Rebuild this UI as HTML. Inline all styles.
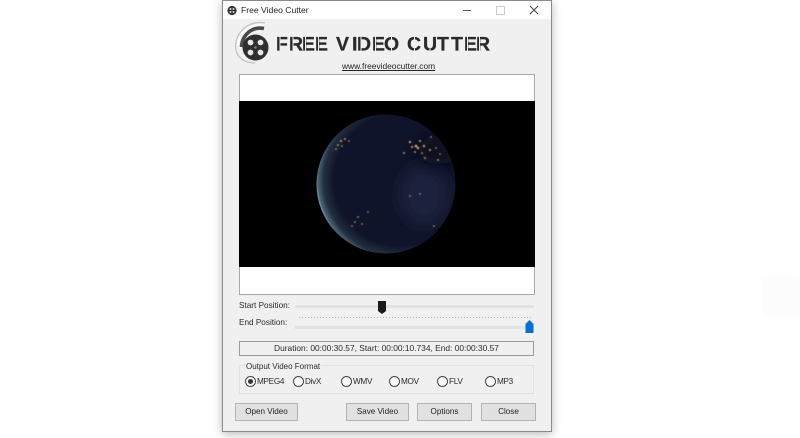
<!DOCTYPE html>
<html><head><meta charset="utf-8">
<style>
html,body{margin:0;padding:0;background:#fff;width:800px;height:438px;overflow:hidden;font-family:"Liberation Sans",sans-serif;color:#222}
.a{position:absolute}
.t{position:absolute;font-size:8.2px;line-height:12px;white-space:nowrap;color:#2a2a2a}
.l{letter-spacing:-.3px;top:376px}
.btn{position:absolute;background:#e1e1e1;border:1px solid #b2b2b2;box-sizing:border-box;font-size:8.1px;text-align:center;line-height:16px;height:18px;color:#222}
.r{position:absolute;top:376px;width:9px;height:9px;border:1px solid #444;border-radius:50%;box-sizing:content-box;background:#fafafa}
</style></head><body>
<div class="a" style="left:222px;top:0;width:330px;height:432px;background:#f0f0f0;box-shadow:0 2px 9px rgba(0,0,0,.28);border:1px solid #8a8a8a;box-sizing:border-box"></div>
<div class="a" style="left:223px;top:1px;width:328px;height:18px;background:#fff"></div>
<svg class="a" style="left:226px;top:4px" width="12" height="12" viewBox="0 0 12 12"><circle cx="6" cy="6.5" r="4.6" fill="#333"/><circle cx="4.5" cy="5" r="1" fill="#ddd"/><circle cx="7.5" cy="5" r="1" fill="#ddd"/><circle cx="4.5" cy="8" r="1" fill="#ddd"/><circle cx="7.5" cy="8" r="1" fill="#ddd"/></svg>
<div class="t" style="left:241px;top:4px;font-size:8.6px;color:#222">Free Video Cutter</div>
<div class="a" style="left:463px;top:10px;width:8px;height:1px;background:#555"></div>
<div class="a" style="left:496px;top:6px;width:7px;height:7px;border:1px solid #ccc"></div>
<svg class="a" style="left:529px;top:5px" width="10" height="10"><path d="M1 1L9 9M9 1L1 9" stroke="#444" stroke-width="1"/></svg>

<!-- logo -->
<svg class="a" style="left:232px;top:20px" width="46" height="46" viewBox="232 20 46 46">
<path d="M265 23C249 20 236 32 235.500 46C235.500 56 243 63 255 63" fill="none" stroke="#c4c4c4" stroke-width="1.300"/>
<path d="M264 25.500C250 23 238.500 33 238 46" fill="none" stroke="#fff" stroke-width="1.800"/>
<path d="M264 28.500C252 26 242 35 241.500 47" fill="none" stroke="#4a4a4a" stroke-width="3.600"/>
<circle cx="255.500" cy="47.500" r="13" fill="#2f2f2f"/>
<circle cx="250.500" cy="42.500" r="2.900" fill="#e8e8e8"/><circle cx="260.500" cy="42.500" r="2.900" fill="#e8e8e8"/>
<circle cx="250.500" cy="52.500" r="2.900" fill="#e8e8e8"/><circle cx="260.500" cy="52.500" r="2.900" fill="#e8e8e8"/>
<circle cx="255.500" cy="47.500" r="1.200" fill="#888"/>
</svg>
<svg class="a" style="left:270px;top:28px" width="230" height="30" viewBox="270 28 230 30">
<text y="50.500" font-family="Liberation Sans" font-weight="700" font-size="19.500" fill="#2a2a2a" stroke="#2a2a2a" stroke-width=".25" x="276 289 302 315 336 352 357 372 384 407 423 437 451 464 476">FREEVIDEOCUTTER</text>
<g fill="#f0f0f0">
<rect x="279.500" y="34" width="1" height="18"/><rect x="292.500" y="34" width="1" height="18"/><rect x="305" y="34" width="1" height="18"/><rect x="318" y="34" width="1" height="18"/>
<rect x="360.500" y="34" width="1" height="18"/><rect x="375" y="34" width="1" height="18"/><rect x="391" y="34" width="1" height="18"/>
<rect x="414" y="34" width="1" height="18"/><rect x="429.500" y="34" width="1" height="18"/><rect x="467" y="34" width="1" height="18"/><rect x="479" y="34" width="1" height="18"/>
</g>
</svg>
<div class="t" style="left:342px;top:60px;color:#222;text-decoration:underline;font-size:8.4px">www.freevideocutter.com</div>

<!-- video -->
<div class="a" style="left:239px;top:74px;width:296px;height:221px;background:#fff;border:1px solid #a8a8a8;box-sizing:border-box"></div>
<div class="a" style="left:239px;top:101px;width:296px;height:166px;background:#000"></div>
<svg class="a" style="left:239px;top:101px" width="296" height="166" viewBox="239 101 296 166">
<defs>
<radialGradient id="e" cx="0.6" cy="0.47" r="0.61"><stop offset="0" stop-color="#10142a"/><stop offset=".78" stop-color="#10142a"/><stop offset=".9" stop-color="#222f40"/><stop offset=".97" stop-color="#4c6676"/><stop offset="1" stop-color="#a4c8d6"/></radialGradient>
<filter id="b" x="-50%" y="-50%" width="200%" height="200%"><feGaussianBlur stdDeviation=".45"/></filter>
<filter id="b2" x="-60%" y="-60%" width="220%" height="220%"><feGaussianBlur stdDeviation="8"/></filter>
<clipPath id="c"><circle cx="386" cy="184" r="69.500"/></clipPath>
</defs>
<circle cx="386" cy="184" r="69.500" fill="url(#e)"/>
<g clip-path="url(#c)">
<ellipse cx="424" cy="195" rx="24" ry="30" fill="#1b213c" filter="url(#b2)"/>
<ellipse cx="438" cy="150" rx="20" ry="14" fill="#0c0f1c" filter="url(#b2)"/>
</g>
<g fill="#e8b066" filter="url(#b)">
<circle cx="410" cy="142" r="1.100"/><circle cx="412" cy="147" r="1"/><circle cx="416" cy="146" r="1.300"/><circle cx="420" cy="141" r="1"/><circle cx="418" cy="148" r="1.200"/><circle cx="424" cy="146" r="1.100"/><circle cx="430" cy="150" r="1"/><circle cx="404" cy="153" r=".9"/><circle cx="415" cy="152" r=".9"/><circle cx="436" cy="148" r=".8"/><circle cx="438" cy="160" r=".9"/><circle cx="425" cy="158" r=".9"/><circle cx="422" cy="153" r=".8"/><circle cx="431" cy="137" r=".7"/><circle cx="440" cy="154" r=".7"/>
<circle cx="338" cy="145" r=".9"/><circle cx="341" cy="141" r="1"/><circle cx="336" cy="149" r=".8"/><circle cx="345" cy="139" r=".9"/><circle cx="342" cy="146" r=".8"/><circle cx="349" cy="141" r=".7"/>
<circle cx="355" cy="222" r=".8"/><circle cx="358" cy="217" r=".8"/><circle cx="352" cy="226" r=".8"/><circle cx="368" cy="212" r=".7"/><circle cx="362" cy="224" r=".7"/><circle cx="410" cy="196" r=".7"/><circle cx="420" cy="194" r=".7"/><circle cx="434" cy="226" r=".8"/>
</g>
</svg>

<!-- sliders -->
<div class="t" style="left:239px;top:300px">Start Position:</div>
<div class="a" style="left:295px;top:305px;width:239px;height:3px;background:#e2e2e2"></div>
<svg class="a" style="left:377px;top:300px" width="10" height="15"><path d="M1 1H9V11L5 14L1 11Z" fill="#1a1a1a"/></svg>
<div class="t" style="left:239px;top:317px">End Position:</div>
<div class="a" style="left:299px;top:317px;width:232px;height:1px;background:repeating-linear-gradient(90deg,#bbb 0 1px,transparent 1px 3px)"></div>
<div class="a" style="left:295px;top:326px;width:239px;height:3px;background:#e2e2e2"></div>
<svg class="a" style="left:525px;top:319px" width="10" height="15"><path d="M0.500 5L4.500 1L8.500 5V14H0.500Z" fill="#0a6fd0"/></svg>

<!-- status -->
<div class="a" style="left:239px;top:341px;width:295px;height:15px;border:1px solid #9a9a9a;box-sizing:border-box;text-align:center;font-size:8.4px;line-height:13px;color:#2a2a2a">Duration: 00:00:30.57, Start: 00:00:10.734, End: 00:00:30.57</div>

<!-- format -->
<div class="a" style="left:239px;top:365px;width:295px;height:29px;border:1px solid #e2e2e2;box-sizing:border-box"></div>
<div class="t" style="left:245px;top:361px;background:#f0f0f0;padding:0 1px;font-size:8px">Output Video Format</div>
<div class="r" style="left:245px"></div><div class="a" style="left:248px;top:379px;width:5px;height:5px;border-radius:50%;background:#333"></div>
<div class="t l" style="left:257px">MPEG4</div>
<div class="r" style="left:293px"></div><div class="t l" style="left:305px">DivX</div>
<div class="r" style="left:341px"></div><div class="t l" style="left:353px">WMV</div>
<div class="r" style="left:389px"></div><div class="t l" style="left:401px">MOV</div>
<div class="r" style="left:437px"></div><div class="t l" style="left:449px">FLV</div>
<div class="r" style="left:485px"></div><div class="t l" style="left:497px">MP3</div>

<!-- buttons -->
<div class="btn" style="left:235px;top:403px;width:63px">Open Video</div>
<div class="btn" style="left:346px;top:403px;width:63px">Save Video</div>
<div class="btn" style="left:417px;top:403px;width:55px">Options</div>
<div class="btn" style="left:481px;top:403px;width:55px">Close</div>

<!-- faint watermark -->
<div class="a" style="left:762px;top:276px;width:38px;height:42px;background:#fcfcfc;filter:blur(4px)"></div>
</body></html>
